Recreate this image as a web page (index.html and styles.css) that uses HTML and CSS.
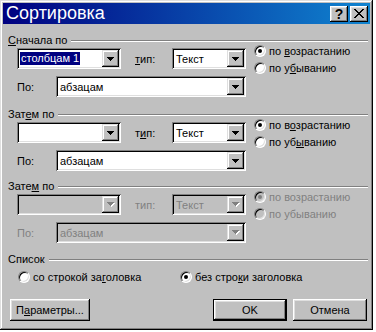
FILE: index.html
```html
<!DOCTYPE html>
<html lang="ru">
<head>
  <meta charset="UTF-8" />
  <title>Сортировка</title>
  <link rel="stylesheet" href="styles.css">
</head>
<body>
  <div class="window">
    <div class="titlebar">
      <span class="title">Сортировка</span>
      <div class="caption-buttons">
        <span class="cap-btn help">?</span>
        <span class="cap-btn close">
          <svg width="10" height="9" viewBox="0 0 10 9"><path d="M0 0h2v1H0zM8 0h2v1H8zM1 1h2v1H1zM7 1h2v1H7zM2 2h2v1H2zM6 2h2v1H6zM3 3h4v1H3zM4 4h2v1H4zM3 5h4v1H3zM2 6h2v1H2zM6 6h2v1H6zM1 7h2v1H1zM7 7h2v1H7zM0 8h2v1H0zM8 8h2v1H8z"/></svg>
        </span>
      </div>
    </div>

    <div class="content">
      <!-- first key -->
      <section class="group g1">
        <div class="group-title"><span><u>С</u>начала по</span></div>
        <div class="group-body">
          <div class="fields">
            <div class="row">
              <div class="combo key">
                <span class="value"><span class="selected">столбцам 1</span></span>
                <span class="drop"><svg width="7" height="4"><path d="M0 0h7v1H0zM1 1h5v1H1zM2 2h3v1H2zM3 3h1v1H3z"/></svg></span>
              </div>
              <span class="lbl type-lbl"><u>т</u>ип:</span>
              <div class="combo type">
                <span class="value">Текст</span>
                <span class="drop"><svg width="7" height="4"><path d="M0 0h7v1H0zM1 1h5v1H1zM2 2h3v1H2zM3 3h1v1H3z"/></svg></span>
              </div>
            </div>
            <div class="row">
              <span class="lbl by-lbl">По:</span>
              <div class="combo by">
                <span class="value">абзацам</span>
                <span class="drop"><svg width="7" height="4"><path d="M0 0h7v1H0zM1 1h5v1H1zM2 2h3v1H2zM3 3h1v1H3z"/></svg></span>
              </div>
            </div>
          </div>
          <div class="radios">
            <div class="radio-row"><span class="radio checked"></span><span>по <u>в</u>озрастанию</span></div>
            <div class="radio-row"><span class="radio"></span><span>по у<u>б</u>ыванию</span></div>
          </div>
        </div>
      </section>

      <!-- second key -->
      <section class="group g2">
        <div class="group-title"><span>Зат<u>е</u>м по</span></div>
        <div class="group-body">
          <div class="fields">
            <div class="row">
              <div class="combo key">
                <span class="value"></span>
                <span class="drop"><svg width="7" height="4"><path d="M0 0h7v1H0zM1 1h5v1H1zM2 2h3v1H2zM3 3h1v1H3z"/></svg></span>
              </div>
              <span class="lbl type-lbl">т<u>и</u>п:</span>
              <div class="combo type">
                <span class="value">Текст</span>
                <span class="drop"><svg width="7" height="4"><path d="M0 0h7v1H0zM1 1h5v1H1zM2 2h3v1H2zM3 3h1v1H3z"/></svg></span>
              </div>
            </div>
            <div class="row">
              <span class="lbl by-lbl">По:</span>
              <div class="combo by">
                <span class="value">абзацам</span>
                <span class="drop"><svg width="7" height="4"><path d="M0 0h7v1H0zM1 1h5v1H1zM2 2h3v1H2zM3 3h1v1H3z"/></svg></span>
              </div>
            </div>
          </div>
          <div class="radios">
            <div class="radio-row"><span class="radio checked"></span><span>по в<u>о</u>зрастанию</span></div>
            <div class="radio-row"><span class="radio"></span><span>по уб<u>ы</u>ванию</span></div>
          </div>
        </div>
      </section>

      <!-- third key (disabled) -->
      <section class="group g3 disabled">
        <div class="group-title"><span>Зате<u>м</u> по</span></div>
        <div class="group-body">
          <div class="fields">
            <div class="row">
              <div class="combo key">
                <span class="value"></span>
                <span class="drop"><svg width="8" height="5"><path fill="#fff" d="M1 1h7v1H1zM2 2h5v1H2zM3 3h3v1H3zM4 4h1v1H4z"/><path fill="#808080" d="M0 0h7v1H0zM1 1h5v1H1zM2 2h3v1H2zM3 3h1v1H3z"/></svg></span>
              </div>
              <span class="lbl type-lbl">тип:</span>
              <div class="combo type">
                <span class="value">Текст</span>
                <span class="drop"><svg width="8" height="5"><path fill="#fff" d="M1 1h7v1H1zM2 2h5v1H2zM3 3h3v1H3zM4 4h1v1H4z"/><path fill="#808080" d="M0 0h7v1H0zM1 1h5v1H1zM2 2h3v1H2zM3 3h1v1H3z"/></svg></span>
              </div>
            </div>
            <div class="row">
              <span class="lbl by-lbl">По:</span>
              <div class="combo by">
                <span class="value">абзацам</span>
                <span class="drop"><svg width="8" height="5"><path fill="#fff" d="M1 1h7v1H1zM2 2h5v1H2zM3 3h3v1H3zM4 4h1v1H4z"/><path fill="#808080" d="M0 0h7v1H0zM1 1h5v1H1zM2 2h3v1H2zM3 3h1v1H3z"/></svg></span>
              </div>
            </div>
          </div>
          <div class="radios">
            <div class="radio-row"><span class="radio checked"></span><span>по возрастанию</span></div>
            <div class="radio-row"><span class="radio"></span><span>по убыванию</span></div>
          </div>
        </div>
      </section>

      <!-- list -->
      <section class="group list">
        <div class="group-title"><span>Список</span></div>
        <div class="list-radios">
          <div class="radio-row first"><span class="radio"></span><span>со строкой за<u>г</u>оловка</span></div>
          <div class="radio-row"><span class="radio checked"></span><span>без стро<u>к</u>и заголовка</span></div>
        </div>
      </section>

      <div class="buttons">
        <span class="btn params"><span>П<u>а</u>раметры...</span></span>
        <span class="btn ok">OK</span>
        <span class="btn cancel">Отмена</span>
      </div>
    </div>
  </div>
</body>
</html>
```

FILE: styles.css
```css
body {
  margin: 0;
  background: #fff;
  font-family: "Liberation Sans", Arial, sans-serif;
  font-size: 11px;
  color: #000;
}

u {
  text-decoration: underline;
  text-underline-offset: 1px;
}

.window {
  width: 373px;
  height: 330px;
  box-sizing: border-box;
  padding: 3px;
  background: #c0c0c0;
  box-shadow: inset -1px -1px #000, inset 1px 1px #dfdfdf, inset -2px -2px #808080, inset 2px 2px #fff;
  display: flex;
  flex-direction: column;
}

.titlebar {
  height: 21px;
  background: linear-gradient(to right, #000080, #1084d0);
  display: flex;
  align-items: center;
  justify-content: space-between;
  padding: 0 2px 0 3px;
}

.title {
  color: #fff;
  font-size: 18px;
  line-height: 21px;
}

.caption-buttons {
  display: flex;
  gap: 2px;
}

.cap-btn {
  width: 18px;
  height: 16px;
  box-sizing: border-box;
  background: #c0c0c0;
  box-shadow: inset -1px -1px #000, inset 1px 1px #fff, inset -2px -2px #808080, inset 2px 2px #dfdfdf;
  display: flex;
  align-items: center;
  justify-content: center;
}

.help {
  font-weight: bold;
  font-size: 14px;
  line-height: 16px;
  padding-top: 1px;
}

.content {
  flex: 1;
  padding: 10px 2px 0 5px;
  display: flex;
  flex-direction: column;
}

.group-title {
  display: flex;
  align-items: center;
  height: 13px;
  line-height: 13px;
  white-space: nowrap;
}

.group-title::after {
  content: "";
  flex: 1;
  border-top: 1px solid #808080;
  border-bottom: 1px solid #fff;
  margin-left: 4px;
}

.group-body {
  display: flex;
  margin-top: 1px;
}

.g2 { margin-top: 11px; }
.g3 { margin-top: 9px; }
.list { margin-top: 10px; }

.fields {
  margin-left: 9px;
  width: 229px;
  display: flex;
  flex-direction: column;
  gap: 7px;
}

.row {
  display: flex;
  align-items: center;
  height: 21px;
}

.combo {
  height: 21px;
  box-sizing: border-box;
  padding: 2px;
  background: #fff;
  box-shadow: inset 1px 1px #808080, inset -1px -1px #fff, inset 2px 2px #000, inset -2px -2px #dfdfdf;
  display: flex;
}

.combo.key {
  width: 104px;
  margin-right: 14px;
}

.combo.type { width: 74px; }
.combo.by { width: 190px; }

.type-lbl { width: 37px; }
.by-lbl { width: 39px; }

.value {
  flex: 1;
  display: flex;
  align-items: center;
  padding-left: 2px;
  white-space: nowrap;
  overflow: hidden;
}

.selected {
  background: #000080;
  color: #fff;
  line-height: 13px;
  padding: 0 1px;
  margin-left: -1px;
}

.drop {
  width: 17px;
  height: 17px;
  box-sizing: border-box;
  background: #c0c0c0;
  box-shadow: inset -1px -1px #000, inset 1px 1px #dfdfdf, inset -2px -2px #808080, inset 2px 2px #fff;
  display: flex;
  align-items: center;
  justify-content: center;
}

.drop svg {
  display: block;
  shape-rendering: crispEdges;
}

.radios {
  margin-left: 8px;
  margin-top: -6px;
  display: flex;
  flex-direction: column;
}

.radio-row {
  display: flex;
  align-items: center;
  height: 17px;
  white-space: nowrap;
}

.radio {
  position: relative;
  width: 12px;
  height: 12px;
  box-sizing: border-box;
  margin-right: 3px;
  border-radius: 50%;
  border: 1px solid;
  border-color: #808080 #fff #fff #808080;
  background: #fff;
  box-shadow: inset 1px 1px #000, inset -1px -1px #dfdfdf;
}

.radio.checked::after {
  content: "";
  position: absolute;
  left: 3px;
  top: 3px;
  width: 4px;
  height: 4px;
  border-radius: 50%;
  background: #000;
}

/* disabled third key */
.disabled .lbl,
.disabled .value,
.disabled .radio-row {
  color: #808080;
}

.disabled .combo,
.disabled .radio {
  background: #c0c0c0;
}

.disabled .radio.checked::after {
  background: #808080;
}

.list-radios {
  display: flex;
  margin: 2px 0 0 10px;
}

.list-radios .first {
  width: 162px;
}

.buttons {
  display: flex;
  margin: 14px 0 0 2px;
}

.btn {
  width: 74px;
  height: 22px;
  box-sizing: border-box;
  background: #c0c0c0;
  box-shadow: inset -1px -1px #000, inset 1px 1px #fff, inset -2px -2px #808080, inset 2px 2px #dfdfdf;
  display: flex;
  align-items: center;
  justify-content: center;
}

.btn.params {
  width: 80px;
  margin-right: 123px;
}

.btn.ok {
  border: 1px solid #000;
  margin-right: 6px;
}
```
